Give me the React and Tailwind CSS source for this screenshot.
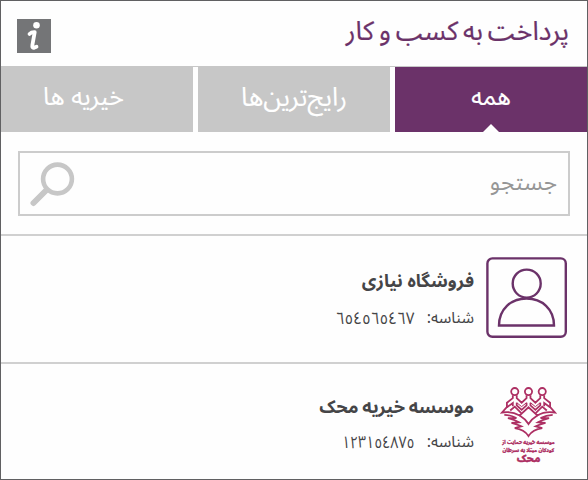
function MahakLogo() {
  return (
    <div className="flex w-[80px] flex-col items-center text-[#ad2f63]">
      <svg className="mr-[1px] h-[51px] w-[57px] shrink-0" viewBox="5 6 174 156" fill="none" stroke="currentColor" strokeWidth="5.5" strokeLinejoin="miter">
        <circle cx="50" cy="20" r="11" />
        <circle cx="92" cy="20" r="11" />
        <circle cx="134" cy="20" r="11" />
        <path d="M44 31 V40 L26 54 V68 M56 31 V40 L71 54 L86 40 V31 M98 31 V40 L113 54 L128 40 V31 M140 31 V40 L158 54 V68" />
        <path d="M26 68 L44 55 V65 M158 68 L140 55 V65 M56 54 V62 L71 76 L86 62 V54 M98 54 V62 L113 76 L128 62 V54" />
        <path d="M56 54 L71 66 L86 54 M98 54 L113 66 L128 54" strokeWidth="3" />
        <path d="M27 66 L11 84 Q41 79 65 93 L92 68 L119 93 Q143 79 173 84 L157 66" />
        <path d="M36 78 L50 66 L70 86 M148 78 L134 66 L114 86" />
        <path d="M65 93 Q82 103 92 119 Q102 103 119 93" />
        <path d="M18 91 Q38 92 55 101 L29 101 Q48 105 63 114 L40 116 Q56 120 70 126 L50 132 Q79 136 92 156 Q105 136 134 132 L114 126 Q128 120 144 116 L121 114 Q136 105 155 101 L129 101 Q146 92 166 91" />
      </svg>
      <div className="mr-[1px] flex h-[8px] scale-x-[0.92] items-center text-[5px] leading-none font-black whitespace-nowrap [-webkit-text-stroke:0.3px]">موسسه خیریه حمایت از</div>
      <div className="mr-[1px] flex h-[8px] scale-x-[0.98] items-center text-[5px] leading-none font-black whitespace-nowrap [-webkit-text-stroke:0.3px]">کودکان مبتلا به سرطان</div>
      <div className="mr-[1px] flex h-[9px] items-center text-[10px] leading-none font-black [-webkit-text-stroke:0.3px]">محک</div>
    </div>
  );
}

function Avatar() {
  return (
    <svg className="size-[81px]" viewBox="0 0 81 81" fill="none" stroke="#6b3269" strokeWidth="2.4">
      <rect x="1.4" y="1.4" width="78.4" height="78.4" rx="5" />
      <circle cx="40.7" cy="26.6" r="14" />
      <path d="M13 68.5 C13 52 25 41.5 40.5 41.5 S68 52 68 68.5 Z" />
    </svg>
  );
}

function Row({ icon, name, id }) {
  return (
    <div className="flex h-full items-start">
      {icon}
      <div className="mr-[12px] flex flex-col items-start text-[#454547]">
        {name}
        {id}
      </div>
    </div>
  );
}

export default function App() {
  return (
    <div dir="rtl" lang="fa" className="flex h-[480px] w-[588px] flex-col border border-[#606062] bg-[#fefefe] font-['Noto_Sans_Arabic','Vazirmatn','DejaVu_Sans',sans-serif]">
      <header className="flex h-[65px] shrink-0 items-center justify-between pr-[18px] pl-[16px]">
        <h1 className="mb-[4px] text-[26.5px] leading-[40px] [word-spacing:-2px] whitespace-nowrap text-[#6b3269] [-webkit-text-stroke:0.2px]">پرداخت به کسب و کار</h1>
        <svg className="mt-[5px] size-[34px]" viewBox="0 0 34 34">
          <rect width="34" height="34" fill="#747577" />
          <circle cx="19.5" cy="6.3" r="3.3" fill="#fff" />
          <path d="M12.5 15 Q14.5 13 17.7 13.2 L15.4 26 Q14.9 29.3 17 28.8 L19.5 27.8" fill="none" stroke="#fff" strokeWidth="3.8" strokeLinecap="round" strokeLinejoin="round" />
        </svg>
      </header>
      <nav className="flex h-[66px] shrink-0 gap-[5px] border-t border-[#c7c7c7] text-[25px] text-white">
        <div className="relative flex w-[192px] items-center justify-center bg-[#6b3269]">
          <span className="mb-[4px] text-[24px] [-webkit-text-stroke:0.2px]">همه</span>
          <span className="absolute bottom-0 left-[88px] h-[8px] w-[16px] bg-white [clip-path:polygon(50%_0,100%_100%,0_100%)]" />
        </div>
        <div className="flex w-[192px] items-center justify-center bg-[#c7c7c7]">
          <span className="mb-[5px] text-[26px] [-webkit-text-stroke:0.1px]">رایج‌ترین‌ها</span>
        </div>
        <div className="flex w-[192px] items-center bg-[#c7c7c7] pr-[69px]">
          <span className="mb-[3px] [-webkit-text-stroke:0.1px]">خیریه ها</span>
        </div>
      </nav>
      <section className="flex h-[104px] shrink-0 border-b-2 border-[#d0d0d0] px-[17px] pt-[19px]">
        <div className="flex h-[65px] flex-1 items-center justify-between border-2 border-[#cccccc] pr-[11px] pl-[10px]">
          <span className="text-[23px] text-[#969696]">جستجو</span>
          <svg className="size-[46px]" viewBox="0 0 46 46" fill="none" stroke="#c7c7c7" strokeLinecap="round">
            <circle cx="27.5" cy="18" r="14.4" strokeWidth="4.6" />
            <path d="M16.5 29 L3.5 42" strokeWidth="6" />
          </svg>
        </div>
      </section>
      <section className="h-[128px] shrink-0 border-b-2 border-[#d0d0d0] pt-[21px] pr-[20px]">
        <Row
          icon={<Avatar />}
          name={<b className="mt-[8px] flex h-[32px] items-center text-[18px]">فروشگاه نیازی</b>}
          id={<span className="mt-[7px] flex h-[28px] items-center gap-[11px] text-[16px]"><span>شناسه:</span><span className="mt-[3px] mr-[1px] origin-right scale-x-[0.9] text-[17px]">٦٥٤٥٦٥٤٦٧</span></span>}
        />
      </section>
      <section className="flex-1 pt-[23px] pr-[18px]">
        <Row
          icon={<MahakLogo />}
          name={<b className="mt-[4px] mr-[3px] flex h-[32px] items-center text-[18px] [word-spacing:-1px]">موسسه خیریه محک</b>}
          id={<span className="mt-[5px] mr-[3px] flex h-[28px] items-center gap-[11px] text-[16px]"><span>شناسه:</span><span className="mt-[3px] mr-[1px] origin-right scale-x-[0.83] text-[17px]">١٢٣١٥٤٨٧٥</span></span>}
        />
      </section>
    </div>
  );
}
